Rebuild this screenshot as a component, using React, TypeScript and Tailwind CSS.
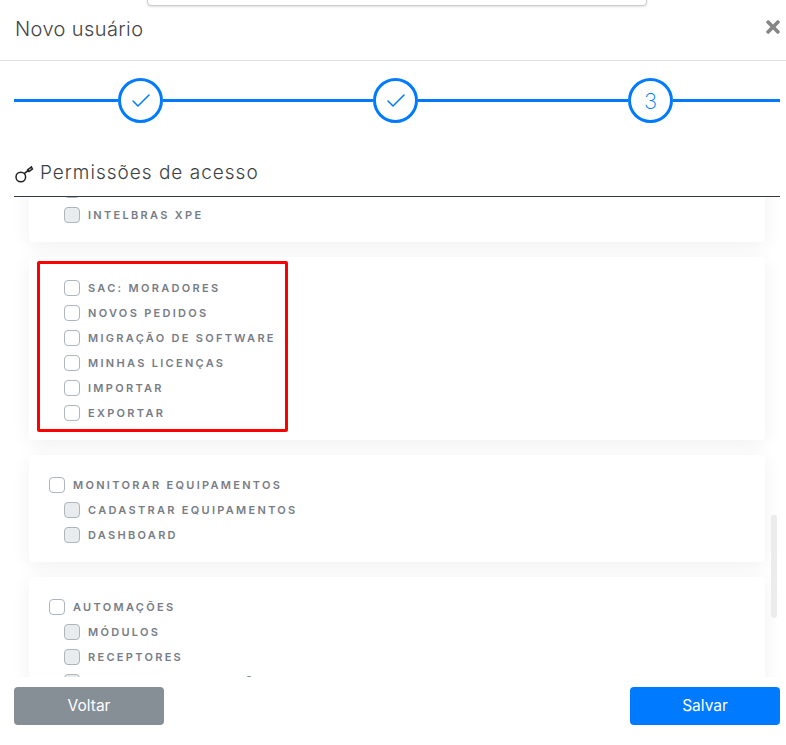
import { FaTimes } from 'react-icons/fa';
import { Check } from 'lucide-react';

interface Perm {
  label: string;
  child?: boolean;
  disabled?: boolean;
}

const exportGroup: Perm[] = [
  { label: 'SAC: Moradores', child: true },
  { label: 'Novos pedidos', child: true },
  { label: 'Migração de software', child: true },
  { label: 'Minhas licenças', child: true },
  { label: 'Importar', child: true },
  { label: 'Exportar', child: true },
];

const monitorGroup: Perm[] = [
  { label: 'Monitorar equipamentos' },
  { label: 'Cadastrar equipamentos', child: true, disabled: true },
  { label: 'Dashboard', child: true, disabled: true },
];

const autoGroup: Perm[] = [
  { label: 'Automações' },
  { label: 'Módulos', child: true, disabled: true },
  { label: 'Receptores', child: true, disabled: true },
  { label: 'Controles de portões', child: true, disabled: true },
];

function Row({ perm }: { perm: Perm }) {
  return (
    <div className={`flex h-[25px] items-center ${perm.child ? 'pl-[35px]' : 'pl-[20px]'}`}>
      <span
        className={`h-4 w-4 shrink-0 rounded-[4px] border border-[#adb5bd] ${perm.disabled ? 'bg-[#e9ecef]' : 'bg-white'}`}
      />
      <span className="ml-2 pt-[2px] text-[11px] font-semibold uppercase tracking-[2.3px] text-[#777c85]">
        {perm.label}
      </span>
    </div>
  );
}

function Card({ perms, className = '' }: { perms: Perm[]; className?: string }) {
  return (
    <div className={`relative rounded bg-white shadow-[0_4px_20px_rgba(0,0,0,0.06)] ${className}`}>
      {perms.map((p) => (
        <Row key={p.label} perm={p} />
      ))}
    </div>
  );
}

function Step({ children }: { children: React.ReactNode }) {
  return (
    <div className="flex h-[45px] w-[45px] shrink-0 items-center justify-center rounded-full border-[3px] border-[#007bff] text-[#007bff]">
      {children}
    </div>
  );
}

export default function App() {
  return (
    <div className="relative flex h-[745px] w-full flex-col overflow-hidden bg-white font-['Inter',sans-serif]">
      {/* Sliver of whatever sits behind the modal */}
      <div className="absolute left-[147px] top-[-10px] h-4 w-[500px] rounded border border-[#ccc] bg-white shadow-sm" />

      {/* Header */}
      <div className="flex h-[61px] shrink-0 items-start justify-between border-b border-[#e2e2e2] pl-[15px] pr-[3px]">
        <h1 className="mt-[16px] text-[20px] font-light leading-[26px] tracking-[0.4px] text-[#444]">Novo usuário</h1>
        <FaTimes className="mt-[17px] text-[#868686]" size={20} />
      </div>

      {/* Stepper */}
      <div className="flex items-center pl-[14px] pr-[6px] pt-[17px]">
        <div className="h-[3px] w-[104px] bg-[#007bff]" />
        <Step>
          <Check size={24} strokeWidth={1.5} />
        </Step>
        <div className="h-[3px] w-[210px] bg-[#007bff]" />
        <Step>
          <Check size={24} strokeWidth={1.5} />
        </Step>
        <div className="h-[3px] w-[210px] bg-[#007bff]" />
        <Step>
          <span className="text-[22px] font-extralight leading-none">3</span>
        </Step>
        <div className="h-[3px] flex-1 bg-[#007bff]" />
      </div>

      {/* Section title */}
      <div className="ml-[14px] mr-[6px] mt-[29px] flex h-[45px] items-center border-b border-[#343a40] pb-[2px]">
        <svg width="20" height="20" viewBox="0 0 20 20" fill="none" stroke="#222" strokeWidth="1.5" className="shrink-0">
          <circle cx="6.8" cy="14" r="4.8" />
          <path d="M10.2 10.6 L14 7.6 M13.6 6.8 L17.4 4 L18.4 6 L15 8.4 Z" />
        </svg>
        <h2 className="ml-[6px] text-[19px] font-light tracking-[1px] text-[#3b3f44]">Permissões de acesso</h2>
      </div>

      {/* Scroll area */}
      <div className="relative ml-[14px] mr-[6px] h-[480px] shrink-0 overflow-hidden">
        <div className="mt-[-20px] flex flex-col gap-[15px] px-[15px]">
          <Card
            className="pb-[15px]"
            perms={[
              { label: 'Intelbras', child: true, disabled: true },
              { label: 'Intelbras XPE', child: true, disabled: true },
            ]}
          />
          <Card perms={exportGroup} className="pb-[15px] pt-[18px]" />
          <Card perms={monitorGroup} className="pb-[15px] pt-[17px]" />
          <Card perms={autoGroup} className="pb-[15px] pt-[17px]" />
        </div>
        {/* Scrollbar thumb */}
        <div className="absolute right-[3px] top-[318px] h-[103px] w-[6px] rounded-full bg-[#ececec]" />
        {/* Annotation box */}
        <div className="absolute left-[23px] top-[64px] h-[171px] w-[251px] rounded-[2px] border-[3px] border-[#f00]" />
      </div>

      {/* Footer */}
      <div className="flex flex-1 items-start justify-between pl-[14px] pr-[6px] pt-[10px]">
        <button className="h-[38px] w-[150px] rounded bg-[#868e96] text-[15.5px] text-white">Voltar</button>
        <button className="h-[38px] w-[150px] rounded bg-[#007bff] text-[15.5px] text-white">Salvar</button>
      </div>
    </div>
  );
}
